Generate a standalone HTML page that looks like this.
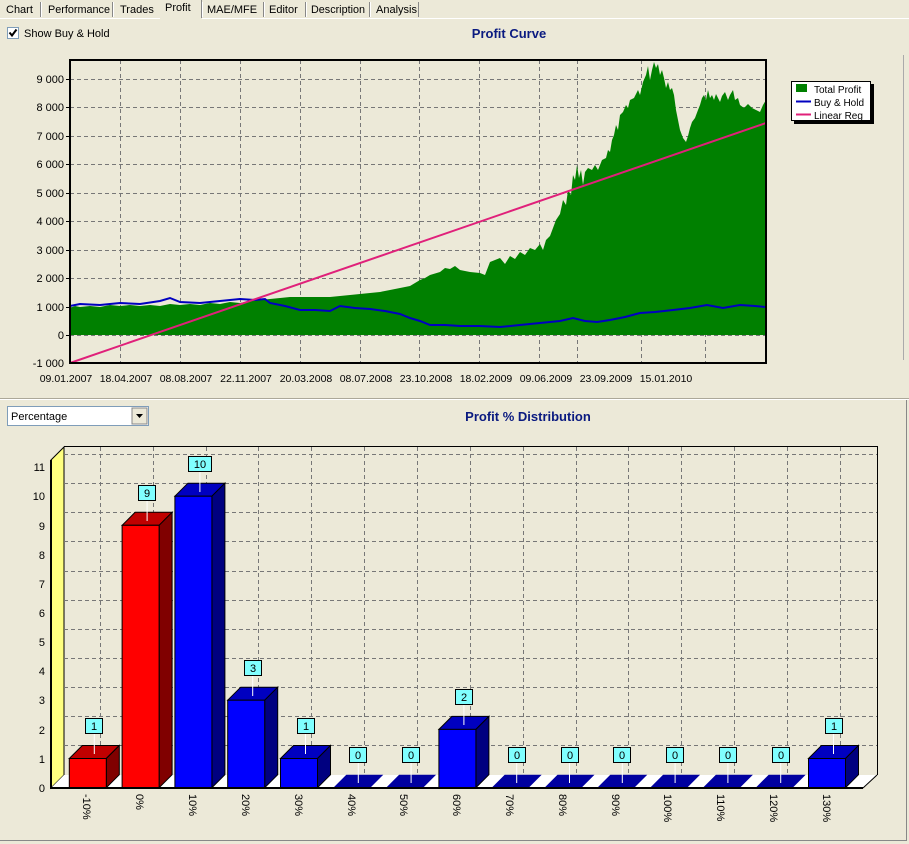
<!DOCTYPE html>
<html><head><meta charset="utf-8"><style>
html,body{margin:0;padding:0;background:#ECE9D8;}
svg{display:block;font-family:"Liberation Sans",sans-serif;}
</style></head><body>
<svg width="909" height="844" viewBox="0 0 909 844" xmlns="http://www.w3.org/2000/svg">
<rect width="909" height="844" fill="#ECE9D8"/>
<!-- tabs -->
<g font-size="11" fill="#000">
<text x="6" y="13">Chart</text>
<text x="48" y="13" textLength="62" lengthAdjust="spacingAndGlyphs">Performance</text>
<text x="120" y="13">Trades</text>
<text x="165" y="11">Profit</text>
<text x="207" y="13">MAE/MFE</text>
<text x="269" y="13">Editor</text>
<text x="311" y="13" textLength="54" lengthAdjust="spacingAndGlyphs">Description</text>
<text x="376" y="13">Analysis</text>
</g>
<g stroke="#fff" stroke-width="1"><line x1="41.5" y1="2" x2="41.5" y2="17"/><line x1="113.5" y1="2" x2="113.5" y2="17"/><line x1="202.5" y1="2" x2="202.5" y2="17"/><line x1="264.5" y1="2" x2="264.5" y2="17"/><line x1="306.5" y1="2" x2="306.5" y2="17"/><line x1="370.5" y1="2" x2="370.5" y2="17"/></g>
<g stroke="#888" stroke-width="1"><line x1="40.5" y1="2" x2="40.5" y2="17"/><line x1="112.5" y1="2" x2="112.5" y2="17"/><line x1="201.5" y1="0" x2="201.5" y2="18"/><line x1="263.5" y1="2" x2="263.5" y2="17"/><line x1="305.5" y1="2" x2="305.5" y2="17"/><line x1="369.5" y1="2" x2="369.5" y2="17"/><line x1="418.5" y1="2" x2="418.5" y2="17"/></g>
<line x1="0" y1="18.5" x2="160" y2="18.5" stroke="#fff"/><line x1="202" y1="18.5" x2="909" y2="18.5" stroke="#fff"/>
<!-- checkbox -->
<rect x="7.5" y="27.5" width="11" height="11" fill="#fff" stroke="#7F9DB9"/>
<path d="M9.5 32.5 L12 35.5 L16.5 29.5" stroke="#000" stroke-width="2" fill="none"/>
<text x="24" y="37" font-size="11">Show Buy &amp; Hold</text>
<text x="509" y="38" font-size="13" font-weight="bold" fill="#0A1A80" text-anchor="middle">Profit Curve</text>
<!-- top plot -->
<g stroke="#777" stroke-dasharray="4,3" stroke-width="1">
<line x1="70" y1="79.5" x2="766" y2="79.5"/><line x1="70" y1="107.5" x2="766" y2="107.5"/><line x1="70" y1="136.5" x2="766" y2="136.5"/><line x1="70" y1="164.5" x2="766" y2="164.5"/><line x1="70" y1="193.5" x2="766" y2="193.5"/><line x1="70" y1="221.5" x2="766" y2="221.5"/><line x1="70" y1="250.5" x2="766" y2="250.5"/><line x1="70" y1="278.5" x2="766" y2="278.5"/><line x1="70" y1="307.5" x2="766" y2="307.5"/>
<line x1="120.5" y1="60" x2="120.5" y2="363"/><line x1="180.5" y1="60" x2="180.5" y2="363"/><line x1="240.5" y1="60" x2="240.5" y2="363"/><line x1="300.5" y1="60" x2="300.5" y2="363"/><line x1="360.5" y1="60" x2="360.5" y2="363"/><line x1="419.5" y1="60" x2="419.5" y2="363"/><line x1="479.5" y1="60" x2="479.5" y2="363"/><line x1="577.5" y1="60" x2="577.5" y2="363"/><line x1="641.5" y1="60" x2="641.5" y2="363"/><line x1="705.5" y1="60" x2="705.5" y2="363"/><line x1="539.5" y1="60" x2="539.5" y2="363"/>
</g>
<path fill="#008000" d="M70,308 75,306 80,307 90,306 100,307 110,305 120,306 130,305 140,306 150,305 160,306 170,304 180,305 190,304 200,305 210,303 220,304 230,302 240,303 250,301 260,300 270,299 280,298 290,297 300,297 310,297 320,297 330,297 340,296 350,295 360,294 370,293 380,292 390,290 400,288 410,286 415,283 420,280 425,278 430,275 440,272 445,268 450,269 455,266 460,270 470,272 480,273 485,275 490,262 495,260 500,258 505,264 510,256 515,259 520,252 525,255 530,248 535,250 540,244 543,250 546,240 550,236 553,228 556,220 560,214 563,200 566,205 568,190 571,195 573,175 575,180 577,165 579,178 581,170 583,185 585,172 588,168 592,170 595,165 598,170 602,160 606,158 608,150 610,152 612,140 614,135 616,125 618,130 620,115 623,112 626,105 628,108 630,100 634,98 638,90 640,95 643,82 646,75 648,66 650,80 652,70 654,62 656,68 658,64 660,75 662,70 664,78 666,88 668,82 670,90 672,88 674,95 676,110 678,120 680,130 683,138 686,142 688,136 690,128 692,122 695,118 698,110 700,105 702,98 704,95 706,100 708,90 710,98 712,95 714,100 716,94 718,98 720,102 722,96 725,92 728,100 730,95 733,90 735,100 738,98 740,105 744,108 748,104 752,108 756,110 760,112 763,105 766,100 766,335 70,335Z"/>
<line x1="70" y1="335.5" x2="766" y2="335.5" stroke="#777" stroke-dasharray="4,3"/>
<polyline fill="none" stroke="#0000C0" stroke-width="2" points="70,306 80,304 100,305 120,303 140,304 160,301 170,298 180,302 200,303 220,301 240,299 255,300 265,299 270,303 285,306 300,310 315,310 330,311 340,306 355,308 370,309 385,311 400,314 410,318 420,321 430,325 445,325 460,326 480,326 500,327 520,325 540,323 560,321 573,318 585,321 597,322 610,320 625,317 640,313 655,312 673,310 690,308 707,305 723,308 740,305 755,306 765,307"/>
<line x1="70" y1="363" x2="766" y2="123" stroke="#E0207A" stroke-width="2"/>
<rect x="70" y="60" width="696" height="303" fill="none" stroke="#000" stroke-width="2"/>
<g stroke="#000"><line x1="66" y1="79.5" x2="70" y2="79.5"/><line x1="66" y1="107.5" x2="70" y2="107.5"/><line x1="66" y1="136.5" x2="70" y2="136.5"/><line x1="66" y1="164.5" x2="70" y2="164.5"/><line x1="66" y1="193.5" x2="70" y2="193.5"/><line x1="66" y1="221.5" x2="70" y2="221.5"/><line x1="66" y1="250.5" x2="70" y2="250.5"/><line x1="66" y1="278.5" x2="70" y2="278.5"/><line x1="66" y1="307.5" x2="70" y2="307.5"/><line x1="66" y1="335.5" x2="70" y2="335.5"/></g>
<g font-size="11" text-anchor="end"><text x="64" y="83">9 000</text><text x="64" y="111">8 000</text><text x="64" y="140">7 000</text><text x="64" y="168">6 000</text><text x="64" y="197">5 000</text><text x="64" y="225">4 000</text><text x="64" y="254">3 000</text><text x="64" y="282">2 000</text><text x="64" y="311">1 000</text><text x="64" y="339">0</text><text x="64" y="367">-1 000</text></g>
<g font-size="10.5" text-anchor="middle"><text x="66" y="382">09.01.2007</text><text x="126" y="382">18.04.2007</text><text x="186" y="382">08.08.2007</text><text x="246" y="382">22.11.2007</text><text x="306" y="382">20.03.2008</text><text x="366" y="382">08.07.2008</text><text x="426" y="382">23.10.2008</text><text x="486" y="382">18.02.2009</text><text x="546" y="382">09.06.2009</text><text x="606" y="382">23.09.2009</text><text x="666" y="382">15.01.2010</text></g>
<!-- legend -->
<rect x="794" y="84" width="80" height="40" fill="#000"/>
<rect x="791.5" y="81.5" width="79" height="39" fill="#fff" stroke="#000"/>
<rect x="796" y="84" width="11" height="8" fill="#008000"/>
<line x1="796" y1="101.5" x2="811" y2="101.5" stroke="#0000C0" stroke-width="2"/>
<line x1="796" y1="114.5" x2="811" y2="114.5" stroke="#E0207A" stroke-width="2"/>
<g font-size="10"><text x="814" y="93">Total Profit</text><text x="814" y="106">Buy &amp; Hold</text><text x="814" y="119">Linear Reg</text></g>
<!-- splitters -->
<line x1="903.5" y1="55" x2="903.5" y2="360" stroke="#aaa"/>
<line x1="0" y1="398.5" x2="909" y2="398.5" stroke="#aca899"/><line x1="0" y1="399.5" x2="909" y2="399.5" stroke="#fff"/>
<line x1="906.5" y1="400" x2="906.5" y2="840" stroke="#888"/><line x1="0" y1="840.5" x2="907" y2="840.5" stroke="#888"/>
<!-- dropdown -->
<rect x="7.5" y="406.5" width="141" height="19" fill="#fff" stroke="#7F9DB9"/>
<text x="11" y="420" font-size="11">Percentage</text>
<rect x="132" y="408" width="15" height="16" fill="#ECE9D8" stroke="#888"/>
<path d="M136 414 L143 414 L139.5 418Z" fill="#000"/>
<text x="528" y="421" font-size="13" font-weight="bold" fill="#0A1A80" text-anchor="middle">Profit % Distribution</text>
<!-- bottom chart -->
<polygon points="51,460 64,447 64,775 51,788" fill="#FFFF80" stroke="#000"/>
<polygon points="51,788 64,775 877,775 863,788" fill="#fff"/>
<g stroke="#777" stroke-dasharray="4,3">
<line x1="64" y1="454.5" x2="877" y2="454.5"/><line x1="64" y1="483.5" x2="877" y2="483.5"/><line x1="64" y1="512.5" x2="877" y2="512.5"/><line x1="64" y1="541.5" x2="877" y2="541.5"/><line x1="64" y1="571.5" x2="877" y2="571.5"/><line x1="64" y1="600.5" x2="877" y2="600.5"/><line x1="64" y1="629.5" x2="877" y2="629.5"/><line x1="64" y1="658.5" x2="877" y2="658.5"/><line x1="64" y1="687.5" x2="877" y2="687.5"/><line x1="64" y1="716.5" x2="877" y2="716.5"/><line x1="64" y1="745.5" x2="877" y2="745.5"/>
<line x1="100.5" y1="447" x2="100.5" y2="775"/><line x1="153.5" y1="447" x2="153.5" y2="775"/><line x1="206.5" y1="447" x2="206.5" y2="775"/><line x1="258.5" y1="447" x2="258.5" y2="775"/><line x1="311.5" y1="447" x2="311.5" y2="775"/><line x1="364.5" y1="447" x2="364.5" y2="775"/><line x1="417.5" y1="447" x2="417.5" y2="775"/><line x1="470.5" y1="447" x2="470.5" y2="775"/><line x1="523.5" y1="447" x2="523.5" y2="775"/><line x1="576.5" y1="447" x2="576.5" y2="775"/><line x1="628.5" y1="447" x2="628.5" y2="775"/><line x1="681.5" y1="447" x2="681.5" y2="775"/><line x1="734.5" y1="447" x2="734.5" y2="775"/><line x1="787.5" y1="447" x2="787.5" y2="775"/><line x1="840.5" y1="447" x2="840.5" y2="775"/>
</g>
<g fill="none" stroke="#000"><line x1="64" y1="446.5" x2="877" y2="446.5"/><line x1="877.5" y1="446" x2="877.5" y2="775"/><line x1="877" y1="775" x2="863" y2="788"/></g>
<line x1="51" y1="460" x2="51" y2="789" stroke="#000" stroke-width="2"/>
<line x1="50" y1="788" x2="863" y2="788" stroke="#000" stroke-width="2"/>
<g font-size="11" text-anchor="end"><text x="45" y="792">0</text><text x="45" y="763">1</text><text x="45" y="734">2</text><text x="45" y="704">3</text><text x="45" y="675">4</text><text x="45" y="646">5</text><text x="45" y="617">6</text><text x="45" y="588">7</text><text x="45" y="559">8</text><text x="45" y="530">9</text><text x="45" y="500">10</text><text x="45" y="471">11</text></g>
<!-- bars -->
<g stroke="#000" stroke-width="1">
<polygon points="69.3,758.5 82.3,745.5 119.3,745.5 106.3,758.5" fill="#C00000"/><polygon points="106.3,758.5 119.3,745.5 119.3,774.7 106.3,787.7" fill="#800000"/><rect x="69.3" y="758.5" width="37" height="29.2" fill="#FF0000"/>
<polygon points="122.1,525.3 135.1,512.3 172.1,512.3 159.1,525.3" fill="#C00000"/><polygon points="159.1,525.3 172.1,512.3 172.1,774.7 159.1,787.7" fill="#800000"/><rect x="122.1" y="525.3" width="37" height="262.4" fill="#FF0000"/>
<polygon points="174.9,496.2 187.9,483.2 224.9,483.2 211.9,496.2" fill="#0000C0"/><polygon points="211.9,496.2 224.9,483.2 224.9,774.7 211.9,787.7" fill="#000080"/><rect x="174.9" y="496.2" width="37" height="291.5" fill="#0000FF"/>
<polygon points="227.7,700.2 240.7,687.2 277.7,687.2 264.7,700.2" fill="#0000C0"/><polygon points="264.7,700.2 277.7,687.2 277.7,774.7 264.7,787.7" fill="#000080"/><rect x="227.7" y="700.2" width="37" height="87.5" fill="#0000FF"/>
<polygon points="280.5,758.5 293.5,745.5 330.5,745.5 317.5,758.5" fill="#0000C0"/><polygon points="317.5,758.5 330.5,745.5 330.5,774.7 317.5,787.7" fill="#000080"/><rect x="280.5" y="758.5" width="37" height="29.2" fill="#0000FF"/>
<polygon points="438.9,729.4 451.9,716.4 488.9,716.4 475.9,729.4" fill="#0000C0"/><polygon points="475.9,729.4 488.9,716.4 488.9,774.7 475.9,787.7" fill="#000080"/><rect x="438.9" y="729.4" width="37" height="58.3" fill="#0000FF"/>
<polygon points="808.5,758.5 821.5,745.5 858.5,745.5 845.5,758.5" fill="#0000C0"/><polygon points="845.5,758.5 858.5,745.5 858.5,774.7 845.5,787.7" fill="#000080"/><rect x="808.5" y="758.5" width="37" height="29.2" fill="#0000FF"/>
</g>
<g fill="#0000A0">
<polygon points="333.3,787.7 346.3,774.7 383.3,774.7 370.3,787.7"/>
<polygon points="386.1,787.7 399.1,774.7 436.1,774.7 423.1,787.7"/>
<polygon points="491.7,787.7 504.7,774.7 541.7,774.7 528.7,787.7"/>
<polygon points="544.5,787.7 557.5,774.7 594.5,774.7 581.5,787.7"/>
<polygon points="597.3,787.7 610.3,774.7 647.3,774.7 634.3,787.7"/>
<polygon points="650.1,787.7 663.1,774.7 700.1,774.7 687.1,787.7"/>
<polygon points="702.9,787.7 715.9,774.7 752.9,774.7 739.9,787.7"/>
<polygon points="755.7,787.7 768.7,774.7 805.7,774.7 792.7,787.7"/>
</g>
<line x1="50" y1="788" x2="863" y2="788" stroke="#000" stroke-width="2"/>
<!-- value labels -->
<g stroke="#fff"><line x1="94.3" y1="733" x2="94.3" y2="754"/><line x1="147.1" y1="500" x2="147.1" y2="521"/><line x1="199.9" y1="471" x2="199.9" y2="492"/><line x1="252.7" y1="675" x2="252.7" y2="696"/><line x1="305.5" y1="733" x2="305.5" y2="754"/><line x1="463.9" y1="704" x2="463.9" y2="725"/><line x1="833.5" y1="733" x2="833.5" y2="754"/>
<line x1="358.3" y1="762" x2="358.3" y2="783"/><line x1="411.1" y1="762" x2="411.1" y2="783"/><line x1="516.7" y1="762" x2="516.7" y2="783"/><line x1="569.5" y1="762" x2="569.5" y2="783"/><line x1="622.3" y1="762" x2="622.3" y2="783"/><line x1="675.1" y1="762" x2="675.1" y2="783"/><line x1="727.9" y1="762" x2="727.9" y2="783"/><line x1="780.7" y1="762" x2="780.7" y2="783"/></g>
<g fill="#80FFFF" stroke="#000">
<rect x="85.5" y="718.5" width="17" height="15"/><rect x="138.5" y="485.5" width="17" height="15"/><rect x="188.5" y="456.5" width="23" height="15"/><rect x="244.5" y="660.5" width="17" height="15"/><rect x="297.5" y="718.5" width="17" height="15"/><rect x="455.5" y="689.5" width="17" height="15"/><rect x="825.5" y="718.5" width="17" height="15"/>
<rect x="349.5" y="747.5" width="17" height="15"/><rect x="402.5" y="747.5" width="17" height="15"/><rect x="508.5" y="747.5" width="17" height="15"/><rect x="561.5" y="747.5" width="17" height="15"/><rect x="613.5" y="747.5" width="17" height="15"/><rect x="666.5" y="747.5" width="17" height="15"/><rect x="719.5" y="747.5" width="17" height="15"/><rect x="772.5" y="747.5" width="17" height="15"/>
</g>
<g font-size="11" text-anchor="middle">
<text x="94" y="730">1</text><text x="147" y="497">9</text><text x="200" y="468">10</text><text x="253" y="672">3</text><text x="306" y="730">1</text><text x="464" y="701">2</text><text x="834" y="730">1</text>
<text x="358" y="759">0</text><text x="411" y="759">0</text><text x="517" y="759">0</text><text x="570" y="759">0</text><text x="622" y="759">0</text><text x="675" y="759">0</text><text x="728" y="759">0</text><text x="781" y="759">0</text>
</g>
<g font-size="11">
<text transform="translate(83,794) rotate(90)">-10%</text>
<text transform="translate(136,794) rotate(90)">0%</text>
<text transform="translate(189,794) rotate(90)">10%</text>
<text transform="translate(242,794) rotate(90)">20%</text>
<text transform="translate(295,794) rotate(90)">30%</text>
<text transform="translate(348,794) rotate(90)">40%</text>
<text transform="translate(400,794) rotate(90)">50%</text>
<text transform="translate(453,794) rotate(90)">60%</text>
<text transform="translate(506,794) rotate(90)">70%</text>
<text transform="translate(559,794) rotate(90)">80%</text>
<text transform="translate(612,794) rotate(90)">90%</text>
<text transform="translate(664,794) rotate(90)">100%</text>
<text transform="translate(717,794) rotate(90)">110%</text>
<text transform="translate(770,794) rotate(90)">120%</text>
<text transform="translate(823,794) rotate(90)">130%</text>
</g>
</svg>
</body></html>
